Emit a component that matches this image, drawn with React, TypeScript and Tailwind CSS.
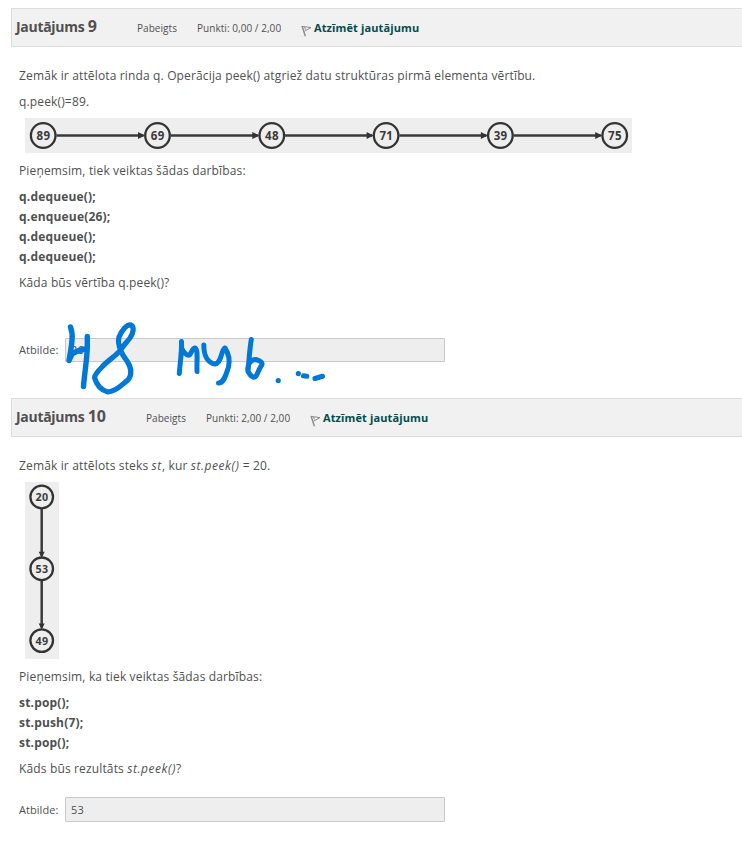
import React from "react";

const INK = "#0078d7";

function Flag() {
  return (
    <svg width="11" height="12" viewBox="0 0 11 12" fill="none" stroke="#8a8a8a" className="shrink-0">
      <path d="M1.2 1.5L4.4 11.2" strokeWidth="1.4" />
      <path d="M0.5 1.3L10 2.6L3.6 6.2M3.6 2.2L4.4 4.6" strokeWidth="1" />
    </svg>
  );
}

type HeaderProps = { number: string; points: string; gap: string };

function Header({ number, points, gap }: HeaderProps) {
  return (
    <header className="ml-[11px] h-[39px] border border-r-0 border-[#dcdcdc] bg-[#f1f1f1] flex items-center">
      <h3 className={`pl-[4px] pb-[2px] shrink-0 font-bold text-[14px] leading-5 whitespace-nowrap ${gap}`}>
        <span className="tracking-[-0.3px]">Jautājums </span>
        <span className="text-[16px]">{number}</span>
      </h3>
      <div className="w-[60px] shrink-0 pt-[1px] text-[10px] tracking-[0.05px] leading-4">Pabeigts</div>
      <div className="w-[104px] shrink-0 pt-[1px] text-[10px] tracking-[0.05px] leading-4 whitespace-nowrap">{points}</div>
      <div className="flex items-center pt-[7px]">
        <Flag />
      </div>
      <a className="ml-[2px] text-[11px] tracking-[0.12px] leading-4 font-bold text-[#024d4d] whitespace-nowrap">Atzīmēt jautājumu</a>
    </header>
  );
}

function Node({ x, y, r, value, size }: { x: number; y: number; r: number; value: number; size: number }) {
  return (
    <g>
      <circle cx={x} cy={y} r={r} fill="#eeeeee" stroke="#333333" strokeWidth="2.3" />
      <text x={x + 0.2} y={y + 4} textAnchor="middle" fontSize={size} letterSpacing="0.3" fontWeight="700" fill="#3a3a3a">
        {value}
      </text>
    </g>
  );
}

function Queue() {
  const values = [89, 69, 48, 71, 39, 75];
  return (
    <svg width="607" height="35" className="ml-[6px] block bg-[#eeeeee]">
      {values.slice(1).map((v, i) => {
        const end = 18.2 + (i + 1) * 114.3;
        return (
          <g key={v}>
            <path d={`M${end - 101} 17.5H${end - 14}`} stroke="#3a3a3a" strokeWidth="2.5" />
            <path d={`M${end - 19.5} 14V21L${end - 12.5} 17.5Z`} fill="#333333" />
          </g>
        );
      })}
      {values.map((v, i) => (
        <Node key={v} x={18.2 + i * 114.3} y={17.5} r={12.3} value={v} size={11.5} />
      ))}
    </svg>
  );
}

function Stack() {
  const values = [20, 53, 49];
  return (
    <svg width="34" height="177" className="ml-[6px] block bg-[#eeeeee]">
      {values.slice(1).map((v, i) => {
        const end = 15 + (i + 1) * 71.8;
        return (
          <g key={v}>
            <path d={`M16.7 ${end - 60}V${end - 13}`} stroke="#3a3a3a" strokeWidth="2.5" />
            <path d={`M13.7 ${end - 17}H19.7L16.7 ${end - 11}Z`} fill="#333333" />
          </g>
        );
      })}
      {values.map((v, i) => (
        <Node key={v} x={16.7} y={15 + i * 71.8} r={11.3} value={v} size={10.7} />
      ))}
    </svg>
  );
}

function Handwriting() {
  return (
    <svg
      width="270"
      height="80"
      viewBox="62 317 270 80"
      className="absolute left-[62px] top-[317px]"
      fill="none"
      stroke={INK}
      strokeWidth="5"
      strokeLinecap="round"
      strokeLinejoin="round"
    >
      <path strokeWidth="5.4" d="M70.500 327C72 331 72.500 336 72 340C71.500 348 70 354 69 360.500L72 354C77 350.500 82 349.500 87 348.500M87.300 336.500V347C87 360 84.500 373 83.500 386.500" />
      <path strokeWidth="5.2" d="M120.500 350C118.500 345 118 341 119 337C122 330 127 324 131 325C134.500 327 133.500 333 130 338C126 343 123 346 120.500 350C116 356 107 361 102 367C98 371 95 374 94.500 377.500C96 383 100 390 108 392C117 391.500 122 384 128 380C132 375 131.500 368 127 361C124 357 122 354 120.500 350" />
      <path strokeWidth="5" d="M181.500 341.500C182 352 180 363 179.300 373.500M181.500 348C184 353 187 356 189.500 355C191.500 353 192 348.500 195 348C198.500 350 196.500 361 197 371.500" />
      <path strokeWidth="5" d="M203.800 345C203.800 356 208 363 215 364C222 363 221 349 225 348C227 351 230.500 358 228.500 367C226 375 224 383 218.500 383" />
      <path strokeWidth="5" d="M251.300 339.500C249.500 350 249 361 248 371.500M248 371C246.500 364 252 359 256 359.500C261 361 264 363 260.500 367C257 373 257 378 253 377C250 376 249 373 248 371" />
      <path strokeWidth="5.1" d="M278.200 380.500H278.300M298.300 373.600H298.400M303.500 375.800L306.800 376.300M315 378.500L322.500 376.300" />
    </svg>
  );
}

export default function App() {
  return (
    <main className="relative w-[742px] h-[850px] overflow-hidden bg-white pt-2 text-[12px] leading-5 text-[#505050] font-['Open_Sans','Noto_Sans',sans-serif]">
      <section className="h-[390px]">
        <Header number="9" points="Punkti: 0,00 / 2,00" gap="w-[125px]" />
        <div className="pl-[19px] pt-[19px] tracking-[0.147px]">
          <p className="mb-[6px]">Zemāk ir attēlota rinda q. Operācija peek() atgriež datu struktūras pirmā elementa vērtību.</p>
          <p className="mb-[6px]">q.peek()=89.</p>
          <Queue />
          <p className="mt-2 mb-[6px]">Pieņemsim, tiek veiktas šādas darbības:</p>
          <p className="font-bold mb-[6px] tracking-[0.18px]">
            q.dequeue();<br />q.enqueue(26);<br />q.dequeue();<br />q.dequeue();
          </p>
          <p>Kāda būs vērtība q.peek()?</p>
          <div className="mt-[45px] flex items-center">
            <label className="w-[46px] text-[11px] tracking-[0.05px]">Atbilde:</label>
            <div className="h-6 w-[380px] rounded-[1px] border border-[#c9c9c9] bg-[#eeeeee] pl-[5px] text-[11px] leading-[22px]">26</div>
          </div>
        </div>
      </section>
      <section>
        <Header number="10" points="Punkti: 2,00 / 2,00" gap="w-[134px]" />
        <div className="pl-[19px] pt-[19px] tracking-[0.147px]">
          <p className="mb-[6px]">Zemāk ir attēlots steks <i className="tracking-[0.6px]">st</i>, kur <i className="tracking-[0.55px]">st.peek()</i> = 20.</p>
          <Stack />
          <p className="mt-2 mb-[6px]">Pieņemsim, ka tiek veiktas šādas darbības:</p>
          <p className="font-bold mb-[6px] tracking-[0.18px]">
            st.pop();<br />st.push(7);<br />st.pop();
          </p>
          <p>Kāds būs rezultāts <i className="tracking-[0.55px]">st.peek()</i>?</p>
          <div className="mt-[18px] flex items-center">
            <label className="w-[46px] text-[11px] tracking-[0.05px]">Atbilde:</label>
            <div className="h-[25px] w-[380px] rounded-[1px] border border-[#c9c9c9] bg-[#eeeeee] pl-[5px] text-[11px] leading-[24px]">53</div>
          </div>
        </div>
      </section>
      <Handwriting />
    </main>
  );
}
